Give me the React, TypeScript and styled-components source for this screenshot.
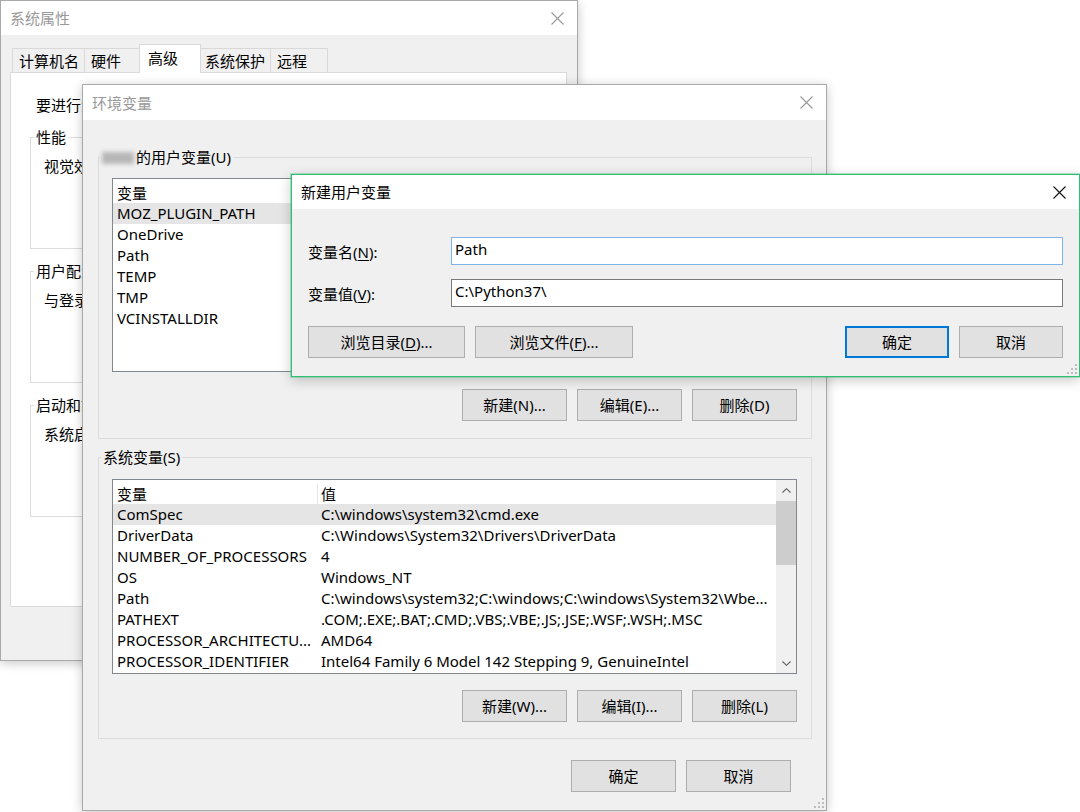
import styled, { createGlobalStyle } from "styled-components";

const GlobalStyle = createGlobalStyle`
  html, body {
    margin: 0;
    padding: 0;
    background: #fff;
  }
  body {
    font-family: "Noto Sans", "Noto Sans CJK SC", sans-serif;
    font-size: 15px;
    color: #000;
  }
`;

const Desktop = styled.div`
  position: relative;
  width: 1080px;
  height: 812px;
  overflow: hidden;
  background: #fff;
`;

const Window = styled.div<{ $x: number; $y: number; $w: number; $h: number; $active?: boolean }>`
  position: absolute;
  left: ${(p) => p.$x}px;
  top: ${(p) => p.$y}px;
  width: ${(p) => p.$w}px;
  height: ${(p) => p.$h}px;
  box-sizing: border-box;
  display: flex;
  flex-direction: column;
  background: #f0f0f0;
  border: 1px solid ${(p) => (p.$active ? "#2ec174" : "#a9a9a9")};
  box-shadow: ${(p) =>
    p.$active
      ? "0 0 0 1px rgba(46, 193, 116, 0.35), 0 3px 12px rgba(0, 0, 0, 0.22)"
      : "0 2px 10px rgba(0, 0, 0, 0.22)"};
`;

const TitleBar = styled.div<{ $h: number; $active?: boolean }>`
  flex: none;
  height: ${(p) => p.$h}px;
  display: flex;
  align-items: center;
  background: #fff;
  color: ${(p) => (p.$active ? "#000" : "#999")};
`;

const TitleText = styled.div`
  flex: 1;
  padding-left: 9px;
  line-height: 20px;
`;

const CloseBox = styled.div`
  width: 40px;
  align-self: stretch;
  display: flex;
  align-items: center;
  justify-content: center;
`;

function CloseIcon({ color }: { color: string }) {
  return (
    <svg width="13" height="13" viewBox="0 0 13 13">
      <path d="M0.5 0.5 L12.5 12.5 M12.5 0.5 L0.5 12.5" stroke={color} strokeWidth="1.1" fill="none" />
    </svg>
  );
}

const Grip = styled.svg`
  position: absolute;
  right: 2px;
  bottom: 2px;
`;

function ResizeGrip() {
  const dots = [
    [8, 0],
    [4, 4],
    [8, 4],
    [0, 8],
    [4, 8],
    [8, 8],
  ];
  return (
    <Grip width="10" height="10" viewBox="0 0 10 10">
      {dots.map(([x, y]) => (
        <rect key={`${x}-${y}`} x={x} y={y} width="2" height="2" fill="#bdbdbd" />
      ))}
    </Grip>
  );
}

const Button = styled.button<{ $w: number; $default?: boolean }>`
  flex: none;
  width: ${(p) => p.$w}px;
  height: 32px;
  box-sizing: border-box;
  padding: 0;
  background: #e1e1e1;
  border: 1px solid ${(p) => (p.$default ? "#0078d7" : "#adadad")};
  box-shadow: ${(p) => (p.$default ? "inset 0 0 0 1px #0078d7" : "none")};
  font: inherit;
  color: #000;
  line-height: 20px;
`;

const ButtonRow = styled.div<{ $top: number; $right: number }>`
  display: flex;
  justify-content: flex-end;
  gap: 10px;
  margin-top: ${(p) => p.$top}px;
  padding-right: ${(p) => p.$right}px;
`;

const Key = styled.span`
  text-decoration: underline;
  text-underline-offset: 2px;
`;

/* ---------- group boxes ---------- */

const Group = styled.fieldset<{ $h?: number }>`
  margin: 0;
  padding: 0;
  min-inline-size: 0;
  border: 1px solid #dcdcdc;
  box-sizing: border-box;
  ${(p) => (p.$h ? `height: ${p.$h}px;` : "")}
  display: flex;
  flex-direction: column;
`;

const Legend = styled.legend<{ $offset: number }>`
  margin-left: ${(p) => p.$offset}px;
  padding: 0 2px;
  line-height: 20px;
`;

const BlurName = styled.span`
  display: inline-block;
  width: 32px;
  height: 12px;
  margin-right: 2px;
  vertical-align: -1px;
  background: #b7b7b7;
  filter: blur(2px);
`;

/* ---------- system properties window ---------- */

const TabStrip = styled.div`
  display: flex;
  align-items: flex-end;
  margin-top: 9px;
  padding-left: 11px;
`;

const Tab = styled.div<{ $selected?: boolean }>`
  position: relative;
  box-sizing: border-box;
  min-width: ${(p) => (p.$selected ? 62 : 58)}px;
  height: ${(p) => (p.$selected ? 29 : 24)}px;
  margin: ${(p) => (p.$selected ? "0 -2px -1px -3px" : "0 0 0 -1px")};
  padding: 0 ${(p) => (p.$selected ? 8 : 5)}px 0 ${(p) => (p.$selected ? 8 : 6)}px;
  line-height: ${(p) => (p.$selected ? 26 : 24)}px;
  background: ${(p) => (p.$selected ? "#fff" : "#f0f0f0")};
  border: 1px solid #d9d9d9;
  border-bottom: none;
  z-index: ${(p) => (p.$selected ? 1 : 0)};
  white-space: nowrap;

  &:first-child {
    margin-left: 0;
  }
`;

const TabPanel = styled.div`
  height: 535px;
  box-sizing: border-box;
  margin: 0 10px 0 9px;
  padding: 22px 19px 0 19px;
  background: #fff;
  border: 1px solid #d9d9d9;
  display: flex;
  flex-direction: column;
  gap: 12px;
`;

const Intro = styled.div`
  margin-left: 6px;
  line-height: 20px;
  white-space: nowrap;
`;

const GroupText = styled.div`
  margin: 9px 0 0 13px;
  line-height: 20px;
  white-space: nowrap;
`;

const GroupFooter = styled.div`
  margin-top: auto;
  padding: 0 12px 10px 0;
  display: flex;
  justify-content: flex-end;
`;

const PanelFooter = styled.div`
  display: flex;
  justify-content: flex-end;
  margin-top: auto;
  padding-bottom: 12px;
`;

const SysFooter = styled.div`
  display: flex;
  justify-content: flex-end;
  gap: 8px;
  padding: 12px 10px 0 0;
`;

/* ---------- environment variables window ---------- */

const EnvBody = styled.div`
  flex: 1;
  padding: 27px 14px 0 15px;
  display: flex;
  flex-direction: column;
  gap: 8px;
`;

const ListBox = styled.div<{ $h: number; $top: number }>`
  height: ${(p) => p.$h}px;
  margin: ${(p) => p.$top}px 14px 0 13px;
  box-sizing: border-box;
  border: 1px solid #828790;
  background: #fff;
  display: flex;
  overflow: hidden;
`;

const ListBody = styled.div`
  flex: 1;
  min-width: 0;
`;

const ListRow = styled.div<{ $selected?: boolean; $header?: boolean }>`
  display: grid;
  grid-template-columns: 204px 1fr;
  height: ${(p) => (p.$header ? 24 : 21)}px;
  padding-top: ${(p) => (p.$header ? 4 : 0)}px;
  box-sizing: border-box;
  line-height: ${(p) => (p.$header ? 20 : 21)}px;
  background: ${(p) => (p.$selected ? "#e5e5e5" : "transparent")};
`;

const ListCell = styled.div<{ $divider?: boolean }>`
  padding-left: ${(p) => (p.$divider ? 3 : 4)}px;
  border-left: ${(p) => (p.$divider ? "1px solid #e5e5e5" : "none")};
  white-space: nowrap;
  overflow: hidden;
`;

const ScrollBar = styled.div`
  flex: none;
  width: 20px;
  background: #f0f0f0;
  display: flex;
  flex-direction: column;
`;

const ScrollArrow = styled.div`
  height: 20px;
  display: flex;
  align-items: center;
  justify-content: center;
`;

const ScrollThumb = styled.div`
  height: 64px;
  margin-top: 1px;
  background: #cdcdcd;
`;

const ScrollTrack = styled.div`
  flex: 1;
`;

function Chevron({ up }: { up?: boolean }) {
  return (
    <svg width="9" height="5" viewBox="0 0 9 5">
      <path
        d={up ? "M0.5 4.5 L4.5 0.7 L8.5 4.5" : "M0.5 0.5 L4.5 4.3 L8.5 0.5"}
        stroke="#606060"
        strokeWidth="1.1"
        fill="none"
      />
    </svg>
  );
}

/* ---------- new variable window ---------- */

const NewBody = styled.div`
  flex: 1;
  padding: 28px 15px 0 16px;
  display: flex;
  flex-direction: column;
  gap: 14px;
`;

const Field = styled.div`
  display: grid;
  grid-template-columns: 143px 612px;
  align-items: center;
`;

const FieldLabel = styled.div`
  line-height: 20px;
  padding-top: 2px;
`;

const TextBox = styled.div<{ $focused?: boolean }>`
  height: 28px;
  box-sizing: border-box;
  padding-left: 3px;
  line-height: 23px;
  background: #fff;
  border: 1px solid ${(p) => (p.$focused ? "#7eb4ea" : "#7a7a7a")};
  white-space: nowrap;
`;

const DialogButtons = styled.div`
  display: flex;
  gap: 10px;
  margin-top: 5px;
  padding-right: 1px;
`;

const Spacer = styled.div`
  flex: 1;
`;

const userVars = ["MOZ_PLUGIN_PATH", "OneDrive", "Path", "TEMP", "TMP", "VCINSTALLDIR"];

const systemVars: [string, string][] = [
  ["ComSpec", "C:\\windows\\system32\\cmd.exe"],
  ["DriverData", "C:\\Windows\\System32\\Drivers\\DriverData"],
  ["NUMBER_OF_PROCESSORS", "4"],
  ["OS", "Windows_NT"],
  ["Path", "C:\\windows\\system32;C:\\windows;C:\\windows\\System32\\Wbe..."],
  ["PATHEXT", ".COM;.EXE;.BAT;.CMD;.VBS;.VBE;.JS;.JSE;.WSF;.WSH;.MSC"],
  ["PROCESSOR_ARCHITECTU...", "AMD64"],
  ["PROCESSOR_IDENTIFIER", "Intel64 Family 6 Model 142 Stepping 9, GenuineIntel"],
];

const tabs = ["计算机名", "硬件", "高级", "系统保护", "远程"];

function SystemProperties() {
  return (
    <Window $x={0} $y={0} $w={578} $h={661}>
      <TitleBar $h={34}>
        <TitleText>系统属性</TitleText>
        <CloseBox>
          <CloseIcon color="#999" />
        </CloseBox>
      </TitleBar>
      <TabStrip>
        {tabs.map((t) => (
          <Tab key={t} $selected={t === "高级"}>
            {t}
          </Tab>
        ))}
      </TabStrip>
      <TabPanel>
        <Intro>要进行大多数更改，你必须作为管理员登录。</Intro>
        <Group $h={122}>
          <Legend $offset={3}>性能</Legend>
          <GroupText>视觉效果，处理器计划，内存使用，以及虚拟内存</GroupText>
          <GroupFooter>
            <Button $w={104}>设置(S)...</Button>
          </GroupFooter>
        </Group>
        <Group $h={122}>
          <Legend $offset={3}>用户配置文件</Legend>
          <GroupText>与登录帐户相关的桌面设置</GroupText>
          <GroupFooter>
            <Button $w={104}>设置(E)...</Button>
          </GroupFooter>
        </Group>
        <Group $h={122}>
          <Legend $offset={3}>启动和故障恢复</Legend>
          <GroupText>系统启动、系统故障和调试信息</GroupText>
          <GroupFooter>
            <Button $w={104}>设置(T)...</Button>
          </GroupFooter>
        </Group>
        <PanelFooter>
          <Button $w={130}>环境变量(N)...</Button>
        </PanelFooter>
      </TabPanel>
      <SysFooter>
        <Button $w={94}>确定</Button>
        <Button $w={94}>取消</Button>
        <Button $w={94}>应用(A)</Button>
      </SysFooter>
    </Window>
  );
}

function EnvironmentVariables() {
  return (
    <Window $x={82} $y={84} $w={745} $h={727}>
      <TitleBar $h={35}>
        <TitleText>环境变量</TitleText>
        <CloseBox>
          <CloseIcon color="#999" />
        </CloseBox>
      </TitleBar>
      <EnvBody>
        <Group>
          <Legend $offset={1}>
            <BlurName />
            的用户变量(U)
          </Legend>
          <ListBox $h={194} $top={11}>
            <ListBody>
              <ListRow $header>
                <ListCell>变量</ListCell>
                <ListCell $divider />
              </ListRow>
              {userVars.map((v, i) => (
                <ListRow key={v} $selected={i === 0}>
                  <ListCell>{v}</ListCell>
                  <ListCell />
                </ListRow>
              ))}
            </ListBody>
          </ListBox>
          <ButtonRow $top={17} $right={14}>
            <Button $w={105}>新建(N)...</Button>
            <Button $w={105}>编辑(E)...</Button>
            <Button $w={105}>删除(D)</Button>
          </ButtonRow>
          <ButtonRow $top={17} $right={0} />
        </Group>
        <Group>
          <Legend $offset={2}>系统变量(S)</Legend>
          <ListBox $h={195} $top={12}>
            <ListBody>
              <ListRow $header>
                <ListCell>变量</ListCell>
                <ListCell $divider>值</ListCell>
              </ListRow>
              {systemVars.map(([name, value], i) => (
                <ListRow key={name} $selected={i === 0}>
                  <ListCell>{name}</ListCell>
                  <ListCell>{value}</ListCell>
                </ListRow>
              ))}
            </ListBody>
            <ScrollBar>
              <ScrollArrow>
                <Chevron up />
              </ScrollArrow>
              <ScrollThumb />
              <ScrollTrack />
              <ScrollArrow>
                <Chevron />
              </ScrollArrow>
            </ScrollBar>
          </ListBox>
          <ButtonRow $top={16} $right={14}>
            <Button $w={105}>新建(W)...</Button>
            <Button $w={105}>编辑(I)...</Button>
            <Button $w={105}>删除(L)</Button>
          </ButtonRow>
          <ButtonRow $top={16} $right={0} />
        </Group>
        <ButtonRow $top={13} $right={21}>
          <Button $w={105}>确定</Button>
          <Button $w={105}>取消</Button>
        </ButtonRow>
      </EnvBody>
      <ResizeGrip />
    </Window>
  );
}

function NewUserVariable() {
  return (
    <Window $x={291} $y={174} $w={789} $h={203} $active>
      <TitleBar $h={34} $active>
        <TitleText>新建用户变量</TitleText>
        <CloseBox>
          <CloseIcon color="#111" />
        </CloseBox>
      </TitleBar>
      <NewBody>
        <Field>
          <FieldLabel>
            变量名(<Key>N</Key>):
          </FieldLabel>
          <TextBox $focused>Path</TextBox>
        </Field>
        <Field>
          <FieldLabel>
            变量值(<Key>V</Key>):
          </FieldLabel>
          <TextBox>C:\Python37\</TextBox>
        </Field>
        <DialogButtons>
          <Button $w={157}>
            浏览目录(<Key>D</Key>)...
          </Button>
          <Button $w={158}>
            浏览文件(<Key>F</Key>)...
          </Button>
          <Spacer />
          <Button $w={104} $default>
            确定
          </Button>
          <Button $w={104}>取消</Button>
        </DialogButtons>
      </NewBody>
      <ResizeGrip />
    </Window>
  );
}

function App() {
  return (
    <Desktop>
      <GlobalStyle />
      <SystemProperties />
      <EnvironmentVariables />
      <NewUserVariable />
    </Desktop>
  );
}

export default App;
